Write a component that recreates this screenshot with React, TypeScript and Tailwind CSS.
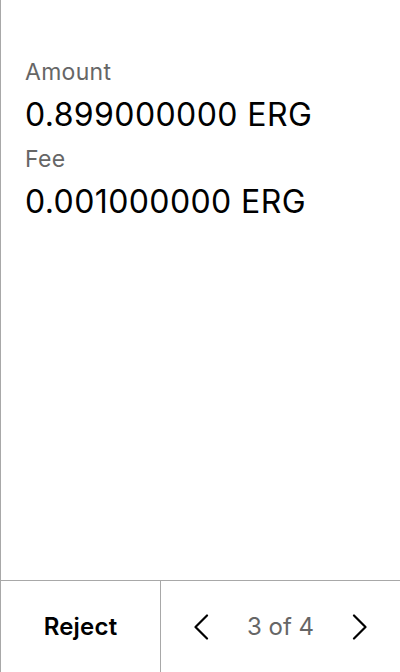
const Field = ({ label, value }: { label: string; value: string }) => (
  <div>
    <div className="text-[23px] leading-[28px] tracking-[0.3px] text-[#666666]">{label}</div>
    <div className="mt-[9px] text-[32px] leading-[40px] tracking-[0.4px] text-black">{value}</div>
  </div>
);

const Chevron = ({ dir }: { dir: "left" | "right" }) => (
  <svg width="16" height="26" viewBox="0 0 16 26" fill="none" className="text-black">
    <polyline
      points={dir === "left" ? "14,1.5 2.5,13 14,24.5" : "2,1.5 13.5,13 2,24.5"}
      stroke="currentColor"
      strokeWidth="2.2"
      strokeLinecap="round"
      strokeLinejoin="round"
    />
  </svg>
);

export default function App() {
  return (
    <div
      className="flex h-[672px] w-[400px] flex-col border-l border-[#a8a8a8] bg-white"
      style={{ fontFamily: "Inter, sans-serif" }}
    >
      {/* details */}
      <div className="flex flex-1 flex-col gap-[10px] px-6 pt-[58px]">
        <Field label="Amount" value="0.899000000 ERG" />
        <Field label="Fee" value="0.001000000 ERG" />
      </div>
      {/* footer */}
      <div className="flex h-[92px] border-t border-[#a8a8a8]">
        <button className="flex w-[159px] items-center justify-center text-[24px] font-semibold tracking-[0.2px] text-black">
          Reject
        </button>
        <div className="flex flex-1 items-center justify-between border-l border-[#a8a8a8] px-8">
          <Chevron dir="left" />
          <span className="text-[24px] text-[#666666]">3 of 4</span>
          <Chevron dir="right" />
        </div>
      </div>
    </div>
  );
}
